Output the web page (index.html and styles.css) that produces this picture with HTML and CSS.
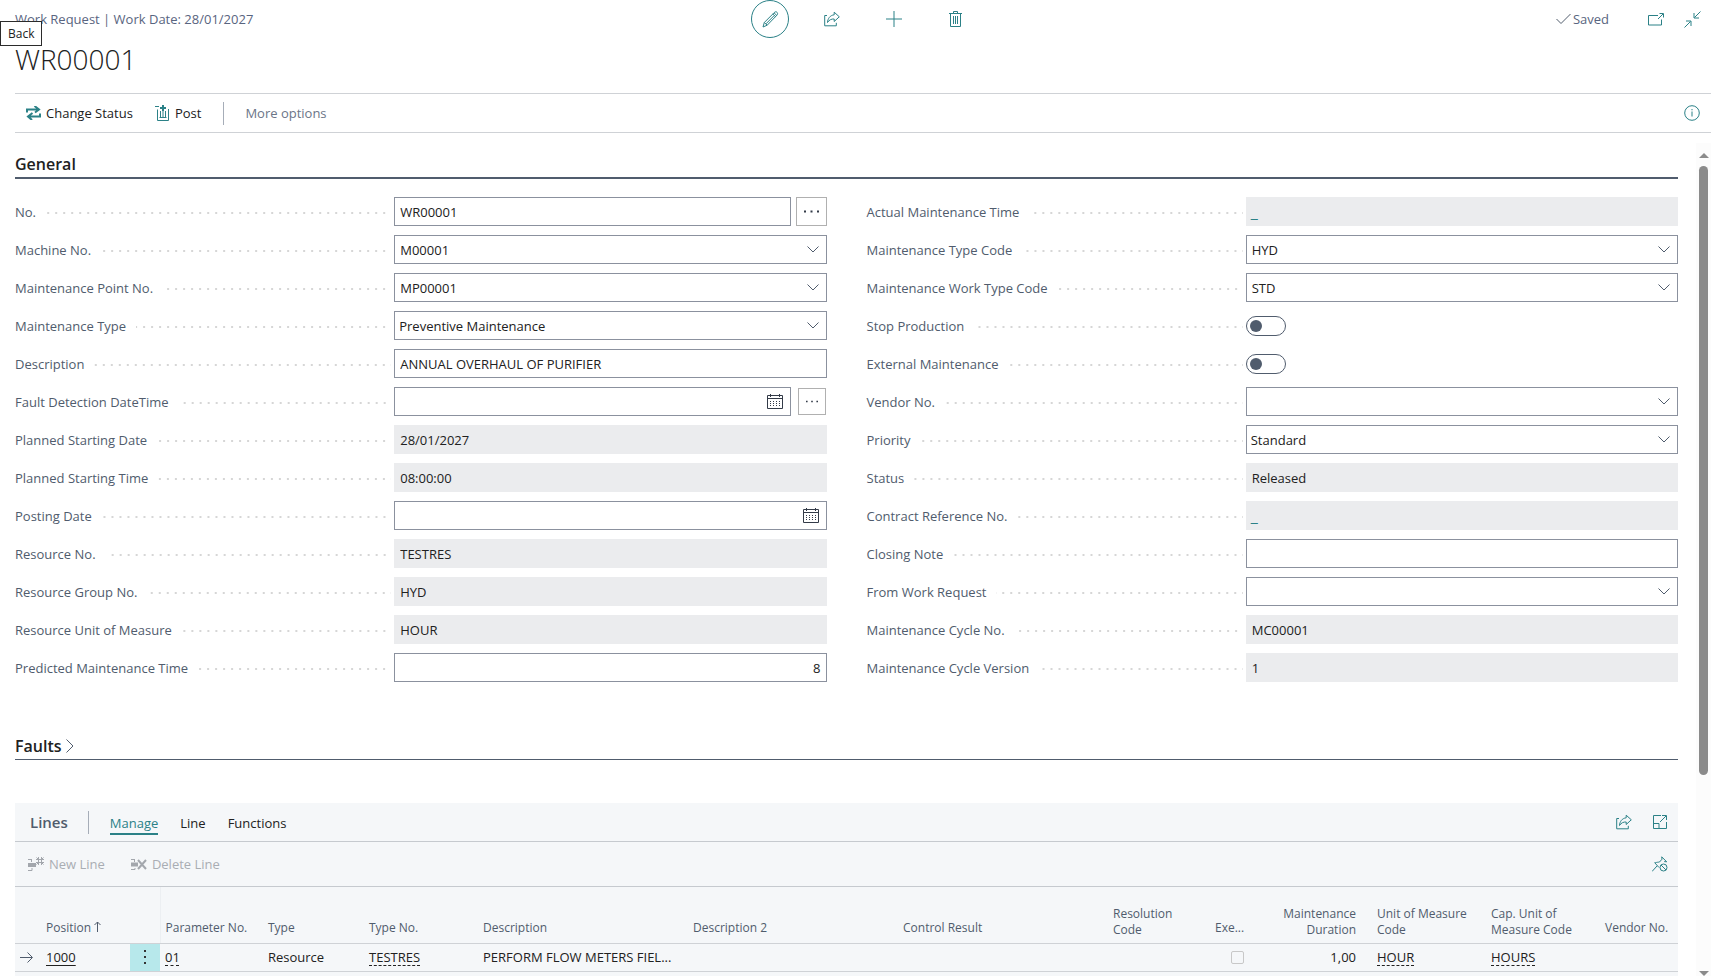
FILE: index.html
```html
<!DOCTYPE html>
<html lang="en">
<head>
    <meta charset="UTF-8">
    <meta name="viewport" content="width=device-width, initial-scale=1.0">
    <title>WR00001 - Work Request</title>
    <link rel="stylesheet" href="styles.css">
</head>
<body>
    <!-- shared icons -->
    <svg class="sprite" aria-hidden="true">
        <symbol id="chevron" viewBox="0 0 12 7"><path d="M.5.5 6 6 11.5.5"/></symbol>
        <symbol id="share" viewBox="0 0 16 16"><path d="M3 4.500H.7v10.300h11.600v-3"/><path d="M10.200 1.200 15.300 5.800l-5.100 4.700V8C7.500 7.800 5.200 8.800 3.500 11.500 3.800 7.500 6 4.300 10.200 3.800z"/></symbol>
        <symbol id="calendar" viewBox="0 0 16 15"><path d="M.5 1.500h15v13H.5zM.5 4.500h15M3.500 0v3M12.500 0v3"/><path d="M3 7.500h10M3 9.500h10M3 11.500h10" stroke-dasharray="1 2" stroke-width="1"/></symbol>
        <symbol id="dots" viewBox="0 0 15 3"><path d="M0 .5h2v2H0zM6.500 .5h2v2h-2zM13 .5h2v2h-2z"/></symbol>
    </svg>

    <div class="tooltip" role="tooltip">Back</div>

    <header class="page-header">
        <div class="caption">Work Request | Work Date: 28/01/2027</div>
        <div class="header-tools">
            <button class="icon-btn round" type="button" aria-label="Edit">
                <svg class="icon" width="17" height="17" viewBox="0 0 17 17"><path d="M1 16l1.300-4.500L12.300 1.500c1-1 2-.9 2.700-.2s.9 1.900 0 2.800L5.200 14.200zM2.300 11.500l2.900 2.700M10.800 3l2.900 2.800M12 1.800l2.900 2.800M4 12.800l8.200-8.300"/></svg>
            </button>
            <button class="icon-btn" type="button" aria-label="Share"><svg class="icon" width="16" height="16"><use href="#share"/></svg></button>
            <button class="icon-btn" type="button" aria-label="New">
                <svg class="icon" width="16" height="16" viewBox="0 0 16 16"><path d="M8 0v16M0 8h16"/></svg>
            </button>
            <button class="icon-btn" type="button" aria-label="Delete">
                <svg class="icon" width="14" height="16" viewBox="0 0 14 16"><path d="M0 2.500h13M4.500 2.500v-2h4v2M1.500 2.500v13h10v-13M4.500 5v8M6.500 5v8M8.500 5v8"/></svg>
            </button>
        </div>
        <div class="header-right">
            <span class="saved">
                <svg class="icon" width="15" height="12" viewBox="0 0 15 12"><path d="M.5 6l4.500 4.500L14.500 1"/></svg>
                Saved
            </span>
            <button class="icon-btn small" type="button" aria-label="Open in new window">
                <svg class="icon" width="16" height="13" viewBox="0 0 16 13"><path d="M10 2.500H.5v9.500h13V6.500M10 6l5-5M11.500.5h4v4"/></svg>
            </button>
            <button class="icon-btn small" type="button" aria-label="Collapse page">
                <svg class="icon" width="17" height="17" viewBox="0 0 17 17"><path d="M16.500.5l-6 6M10 2v5h5M.5 16.500l6-6M2 10h5v5"/></svg>
            </button>
        </div>
    </header>

    <h1 class="title">WR00001</h1>

    <nav class="action-bar">
        <button class="action" type="button">
            <svg class="change-icon" width="15" height="14" viewBox="0 0 15 14"><path d="M1 6.500V3.500h12M8.500 0 13 3.500 9 6.500M14 7.500v3H2M6.500 7 2 10.500l4 3.500"/></svg>
            Change Status
        </button>
        <button class="action" type="button">
            <svg class="icon" width="15" height="16" viewBox="0 0 15 16"><path d="M0 1.500h4M2.500 4.500v11h11V4M5.500 6v6.500M8 6v6.500M10.500 6v6.500M4.500 12.500h7"/><path d="M8 0v6M5 3h6" stroke-width="2"/></svg>
            Post
        </button>
        <span class="divider"></span>
        <button class="action more" type="button">More options</button>
        <button class="info" type="button" aria-label="Show information">
            <svg class="icon" width="16" height="16" viewBox="0 0 16 16"><circle cx="8" cy="8" r="7.300"/><path d="M8 6.500v5M8 4v1.300"/></svg>
        </button>
    </nav>

    <div class="scroll-area">
        <main class="content">
            <h2 class="section-title">General</h2>
            <form class="fields">
                <div class="column">
                    <div class="field">
                        <label for="no">No.</label>
                        <div class="control-row">
                            <div class="control"><input id="no" type="text" value="WR00001"></div>
                            <button class="assist" type="button" aria-label="Choose number series"><svg width="15" height="3"><use href="#dots"/></svg></button>
                        </div>
                    </div>
                    <div class="field">
                        <label for="machine">Machine No.</label>
                        <div class="control"><input id="machine" type="text" value="M00001"><button type="button" aria-label="Look up machine"><svg class="chevron"><use href="#chevron"/></svg></button></div>
                    </div>
                    <div class="field">
                        <label for="point">Maintenance Point No.</label>
                        <div class="control"><input id="point" type="text" value="MP00001"><button type="button" aria-label="Look up maintenance point"><svg class="chevron"><use href="#chevron"/></svg></button></div>
                    </div>
                    <div class="field">
                        <label for="mtype">Maintenance Type</label>
                        <div class="control select"><select id="mtype"><option>Preventive Maintenance</option></select><svg class="chevron"><use href="#chevron"/></svg></div>
                    </div>
                    <div class="field">
                        <label for="description">Description</label>
                        <div class="control"><input id="description" type="text" value="ANNUAL OVERHAUL OF PURIFIER"></div>
                    </div>
                    <div class="field">
                        <label for="fault">Fault Detection DateTime</label>
                        <div class="control-row">
                            <div class="control"><input id="fault" type="text"><button type="button" aria-label="Pick date"><svg class="calendar"><use href="#calendar"/></svg></button></div>
                            <button class="assist compact" type="button" aria-label="Edit date and time"><svg width="12" height="3"><use href="#dots"/></svg></button>
                        </div>
                    </div>
                    <div class="field">
                        <label for="startdate">Planned Starting Date</label>
                        <div class="control readonly"><input id="startdate" type="text" value="28/01/2027" readonly></div>
                    </div>
                    <div class="field">
                        <label for="starttime">Planned Starting Time</label>
                        <div class="control readonly"><input id="starttime" type="text" value="08:00:00" readonly></div>
                    </div>
                    <div class="field">
                        <label for="posting">Posting Date</label>
                        <div class="control"><input id="posting" type="text"><button type="button" aria-label="Pick date"><svg class="calendar"><use href="#calendar"/></svg></button></div>
                    </div>
                    <div class="field">
                        <label for="resource">Resource No.</label>
                        <div class="control readonly"><input id="resource" type="text" value="TESTRES" readonly></div>
                    </div>
                    <div class="field">
                        <label for="group">Resource Group No.</label>
                        <div class="control readonly"><input id="group" type="text" value="HYD" readonly></div>
                    </div>
                    <div class="field">
                        <label for="uom">Resource Unit of Measure</label>
                        <div class="control readonly"><input id="uom" type="text" value="HOUR" readonly></div>
                    </div>
                    <div class="field">
                        <label for="predicted">Predicted Maintenance Time</label>
                        <div class="control"><input id="predicted" class="number" type="text" value="8"></div>
                    </div>
                </div>

                <div class="column">
                    <div class="field">
                        <span class="label">Actual Maintenance Time</span>
                        <div class="control readonly"><a href="#">_</a></div>
                    </div>
                    <div class="field">
                        <label for="typecode">Maintenance Type Code</label>
                        <div class="control"><input id="typecode" type="text" value="HYD"><button type="button" aria-label="Look up type code"><svg class="chevron"><use href="#chevron"/></svg></button></div>
                    </div>
                    <div class="field">
                        <label for="worktype">Maintenance Work Type Code</label>
                        <div class="control"><input id="worktype" type="text" value="STD"><button type="button" aria-label="Look up work type code"><svg class="chevron"><use href="#chevron"/></svg></button></div>
                    </div>
                    <div class="field">
                        <label for="stop">Stop Production</label>
                        <input id="stop" class="toggle" type="checkbox" role="switch">
                    </div>
                    <div class="field">
                        <label for="external">External Maintenance</label>
                        <input id="external" class="toggle" type="checkbox" role="switch">
                    </div>
                    <div class="field">
                        <label for="vendor">Vendor No.</label>
                        <div class="control"><input id="vendor" type="text"><button type="button" aria-label="Look up vendor"><svg class="chevron"><use href="#chevron"/></svg></button></div>
                    </div>
                    <div class="field">
                        <label for="priority">Priority</label>
                        <div class="control select"><select id="priority"><option>Standard</option></select><svg class="chevron"><use href="#chevron"/></svg></div>
                    </div>
                    <div class="field">
                        <label for="status">Status</label>
                        <div class="control readonly"><input id="status" type="text" value="Released" readonly></div>
                    </div>
                    <div class="field">
                        <span class="label">Contract Reference No.</span>
                        <div class="control readonly"><a href="#">_</a></div>
                    </div>
                    <div class="field">
                        <label for="note">Closing Note</label>
                        <div class="control"><input id="note" type="text"></div>
                    </div>
                    <div class="field">
                        <label for="from">From Work Request</label>
                        <div class="control"><input id="from" type="text"><button type="button" aria-label="Look up work request"><svg class="chevron"><use href="#chevron"/></svg></button></div>
                    </div>
                    <div class="field">
                        <label for="cycle">Maintenance Cycle No.</label>
                        <div class="control readonly"><input id="cycle" type="text" value="MC00001" readonly></div>
                    </div>
                    <div class="field">
                        <label for="version">Maintenance Cycle Version</label>
                        <div class="control readonly"><input id="version" type="text" value="1" readonly></div>
                    </div>
                </div>
            </form>

            <h2 class="section-title collapsed">Faults
                <svg width="8" height="14" viewBox="0 0 8 14"><path d="M.5.5 7 7 .5 13.500"/></svg>
            </h2>

            <section class="lines">
                <div class="lines-header">
                    <h3>Lines</h3>
                    <span class="divider"></span>
                    <button class="tab active" type="button">Manage</button>
                    <button class="tab" type="button">Line</button>
                    <button class="tab" type="button">Functions</button>
                    <div class="lines-tools">
                        <button class="tool" type="button" aria-label="Share"><svg class="icon" width="16" height="16"><use href="#share"/></svg></button>
                        <button class="tool" type="button" aria-label="Expand">
                            <svg class="icon" width="15" height="14" viewBox="0 0 15 14"><path d="M7 .5H.5v13h13V7M.5 8.500h5.500v5M7 .5h1M7 7l6-6M9 .5h4.500V5"/></svg>
                        </button>
                    </div>
                </div>
                <div class="lines-actions">
                    <button type="button" disabled>
                        <svg width="16" height="15" viewBox="0 0 16 15"><path d="M0 2.500h4M0 13.500h4V11M3.500 2.500V5"/><path d="M0 8h8" stroke-width="4"/><path d="M10.500 0v8M13.500 0v8M8 2.500h8M8 5.500h8M8.500.5l2 2M15.500.5l-2 2M8.500 7.500l2-2M15.500 7.500l-2-2"/></svg>
                        New Line
                    </button>
                    <button type="button" disabled>
                        <svg width="16" height="13" viewBox="0 0 16 13"><path d="M0 1.500h4M0 11.500h4V10M3.500 1.500V4"/><path d="M0 6.500h7" stroke-width="4"/><path d="M7 2l8 9M15 2l-8 9" stroke-width="2"/></svg>
                        Delete Line
                    </button>
                    <div class="lines-tools">
                        <button class="tool" type="button" aria-label="Unpin">
                            <svg class="icon" width="16" height="16" viewBox="0 0 16 16"><path d="M0 15.500l5-5.500M2.500 6.500l4.500 5M3 7c2-1 3.500-.7 4.500-1L10 3.200 9.700.8l5 5-2.500-.2"/><circle cx="11.500" cy="11.500" r="3.500"/><path d="M9 9l5 5"/></svg>
                        </button>
                    </div>
                </div>
                <table>
                    <colgroup>
                        <col class="c-mark"><col class="c-pos"><col class="c-menu"><col class="c-param"><col class="c-type"><col class="c-typeno">
                        <col class="c-text"><col class="c-text"><col class="c-text"><col class="c-res"><col class="c-exe"><col class="c-dur">
                        <col class="c-uom"><col class="c-uom"><col>
                    </colgroup>
                    <thead>
                        <tr>
                            <th></th>
                            <th>Position <svg width="7" height="11" viewBox="0 0 7 11"><path d="M3.500 11V1M.5 4l3-3 3 3"/></svg></th>
                            <th class="edge"></th>
                            <th>Parameter No.</th>
                            <th>Type</th>
                            <th>Type No.</th>
                            <th>Description</th>
                            <th>Description 2</th>
                            <th>Control Result</th>
                            <th class="two-line">Resolution<br>Code</th>
                            <th>Exe...</th>
                            <th class="two-line right">Maintenance<br>Duration</th>
                            <th class="two-line">Unit of Measure<br>Code</th>
                            <th class="two-line">Cap. Unit of<br>Measure Code</th>
                            <th>Vendor No.</th>
                        </tr>
                    </thead>
                    <tbody>
                        <tr>
                            <td><svg width="13" height="11" viewBox="0 0 13 11"><path d="M0 5.500h12M7.500.5l5 5-5 5"/></svg></td>
                            <td><a class="solid" href="#">1000</a></td>
                            <td class="menu"><button type="button" aria-label="Show more options"><svg width="3" height="15" viewBox="0 0 3 15"><path d="M0 0h2v2H0zM0 6h2v2H0zM0 12h2v2H0z"/></svg></button></td>
                            <td><a href="#">01</a></td>
                            <td>Resource</td>
                            <td><a href="#">TESTRES</a></td>
                            <td>PERFORM FLOW METERS FIEL...</td>
                            <td></td>
                            <td></td>
                            <td></td>
                            <td class="right check"><input type="checkbox" aria-label="Executed" disabled></td>
                            <td class="right">1,00</td>
                            <td><a href="#">HOUR</a></td>
                            <td><a href="#">HOURS</a></td>
                            <td></td>
                        </tr>
                    </tbody>
                </table>
            </section>
        </main>
        <div class="scrollbar" aria-hidden="true">
            <span class="arrow up"></span>
            <span class="thumb"></span>
            <span class="arrow down"></span>
        </div>
    </div>
</body>
</html>
```
FILE: styles.css
```css
* {
    box-sizing: border-box;
}
body {
    font-family: "Open Sans", "Noto Sans", sans-serif;
    font-size: 13px;
    line-height: 18px;
    color: #212121;
    background-color: #fff;
    margin: 0;
    padding: 0 7px 0 15px;
    height: 100vh;
    display: flex;
    flex-direction: column;
    overflow: hidden;
}
button, input, select {
    font: inherit;
    color: inherit;
    margin: 0;
}
button {
    background: none;
    border: none;
    padding: 0;
}
svg {
    fill: none;
    stroke: #505c6d;
    flex: none;
}
.sprite {
    position: absolute;
    width: 0;
    height: 0;
}
.icon {
    stroke: #2b8187;
}

/* header */
.tooltip {
    position: absolute;
    left: 0;
    top: 21px;
    z-index: 1;
    padding: 3px 7px;
    border: 1px solid #2b2b2b;
    background-color: #fff;
    font-size: 12px;
    line-height: 17px;
}
.page-header {
    display: grid;
    grid-template-columns: 1fr auto 1fr;
    align-items: center;
    height: 38px;
    flex: none;
    color: #596580;
}
.header-tools {
    display: flex;
    gap: 24px;
}
.icon-btn {
    display: flex;
    align-items: center;
    justify-content: center;
    width: 38px;
    height: 38px;
}
.icon-btn.round {
    border: 1px solid #2b8187;
    border-radius: 50%;
}
.icon-btn.small {
    width: 37px;
}
.header-right {
    display: flex;
    justify-content: flex-end;
    align-items: center;
}
.saved {
    display: flex;
    align-items: center;
    gap: 2px;
    margin-right: 28px;
}
.saved .icon {
    stroke: #505c6d;
}
.title {
    margin: 0;
    flex: none;
    height: 55px;
    font-size: 28px;
    font-weight: 300;
    line-height: 43px;
}
.action-bar {
    display: flex;
    align-items: center;
    flex: none;
    height: 40px;
    padding: 0 11px;
    border-top: 1px solid #cfd2d6;
    border-bottom: 1px solid #cfd2d6;
}
.action {
    display: flex;
    align-items: center;
    gap: 5px;
    margin-right: 22px;
}
.action.more {
    color: #6b7587;
}
.change-icon {
    stroke: #2b8187;
    stroke-width: 2;
}
.divider {
    width: 1px;
    height: 23px;
    margin-right: 21px;
    background-color: #a6adb8;
}
.info {
    display: flex;
    margin-left: auto;
}

/* scrolling part of the page */
.scroll-area {
    display: flex;
    flex: 1;
    min-height: 0;
    padding-top: 10px;
}
.content {
    flex: 1;
    min-width: 0;
    margin-right: 18px;
    overflow: hidden;
}
.scrollbar {
    display: flex;
    flex-direction: column;
    align-items: center;
    width: 15px;
    padding: 10px 0 0;
    background-color: #fcfcfc;
}
.arrow {
    border: 5px solid transparent;
}
.arrow.up {
    border-top: none;
    border-bottom-color: #8b8b8b;
}
.arrow.down {
    margin-top: auto;
    border-bottom: none;
    border-top-color: #8b8b8b;
}
.thumb {
    width: 9px;
    height: 74%;
    margin-top: 8px;
    border-radius: 5px;
    background-color: #8b8b8b;
}
.section-title {
    display: flex;
    align-items: center;
    gap: 4px;
    margin: 0;
    height: 36px;
    padding-top: 7px;
    border-bottom: 2px solid #505c6d;
    font-size: 16px;
    font-weight: 600;
    line-height: 26px;
}
.section-title.collapsed {
    margin-top: 44px;
    height: 34px;
    border-bottom-width: 1px;
}

/* fields */
.fields {
    display: grid;
    grid-template-columns: 1fr 1fr;
    gap: 40px;
    padding-top: 18px;
}
.column {
    display: flex;
    flex-direction: column;
    gap: 9px;
    min-width: 0;
}
.field {
    display: grid;
    grid-template-columns: 379fr 432fr;
    align-items: center;
    height: 29px;
}
.field label, .label {
    display: flex;
    align-items: center;
    gap: 10px;
    white-space: nowrap;
    color: #505c6d;
}
.field label::after, .label::after {
    content: "";
    flex: 1;
    height: 2px;
    margin: 2px 3px 0 0;
    background: linear-gradient(to right, #d6d6d6 2px, transparent 2px) right top / 8px 2px repeat-x;
}
.control-row {
    display: flex;
    justify-content: space-between;
    align-items: center;
    gap: 5px;
}
.control {
    display: flex;
    align-items: center;
    flex: 1;
    min-width: 0;
    height: 29px;
    border: 1px solid #8b919e;
    background-color: #fff;
}
.control input {
    flex: 1;
    min-width: 0;
    height: 27px;
    padding: 0 5px;
    border: none;
    background: none;
}
.control .number {
    text-align: right;
}
.control button {
    display: flex;
    padding: 0 7px;
}
.control.readonly {
    background-color: #ebecee;
    border-color: #ebecee;
}
.control a {
    padding-left: 4px;
    color: #2b8187;
    font-size: 16px;
    text-decoration: none;
}
.chevron {
    width: 12px;
    height: 7px;
}
.calendar {
    width: 16px;
    height: 15px;
    stroke: #333b48;
}
.control.select {
    display: grid;
}
.control.select select {
    grid-area: 1 / 1;
    height: 27px;
    padding: 0 4px;
    border: none;
    background: none;
    appearance: none;
}
.control.select .chevron {
    grid-area: 1 / 1;
    justify-self: end;
    margin-right: 7px;
    pointer-events: none;
}
.assist {
    display: flex;
    align-items: center;
    justify-content: center;
    width: 31px;
    height: 29px;
    border: 1px solid #b0b0b0;
}
.assist.compact {
    width: 28px;
    height: 27px;
    margin: 0 1px 0 2px;
}
.assist svg {
    fill: #333b48;
    stroke: none;
}
.toggle {
    appearance: none;
    display: flex;
    align-items: center;
    width: 40px;
    height: 20px;
    padding-left: 3px;
    border: 1px solid #505c6d;
    border-radius: 10px;
}
.toggle::before {
    content: "";
    width: 12px;
    height: 12px;
    border-radius: 50%;
    background-color: #505c6d;
}
.toggle:checked {
    justify-content: flex-end;
    padding: 0 3px 0 0;
}

/* lines */
.lines {
    margin-top: 43px;
    height: 200px;
    background-color: #f5f7f9;
}
.lines-header, .lines-actions {
    display: flex;
    align-items: center;
    border-bottom: 1px solid #c6cacf;
}
.lines-header {
    height: 39px;
    padding: 0 10px 0 15px;
}
.lines-header h3 {
    margin: 0 20px 0 0;
    font-size: 15px;
    font-weight: 600;
    color: #505c6d;
}
.tab {
    margin-right: 22px;
    padding: 4px 0 1px;
    border-bottom: 2px solid transparent;
}
.tab.active {
    color: #2b8187;
    border-color: #2b8187;
}
.lines-tools {
    display: flex;
    gap: 21px;
    margin-left: auto;
}
.tool {
    display: flex;
    align-items: center;
}
.lines-actions {
    height: 45px;
    padding: 0 10px 0 13px;
}
.lines-actions > button {
    display: flex;
    align-items: center;
    gap: 5px;
    margin-right: 26px;
    color: #a9adb3;
}
.lines-actions > button svg {
    stroke: #a3a7ad;
}
table {
    width: 100%;
    table-layout: fixed;
    border-collapse: collapse;
}
th, td {
    padding: 0 5px;
    text-align: left;
    white-space: nowrap;
}
th {
    height: 56px;
    padding-bottom: 7px;
    border-bottom: 1px solid #cfd2d6;
    font-size: 12px;
    font-weight: 400;
    line-height: 16px;
    vertical-align: bottom;
    color: #505c6d;
}
.two-line {
    padding-bottom: 5px;
}
td {
    height: 28px;
    border-bottom: 1px solid #cfd2d6;
    line-height: 17px;
}
td svg {
    display: block;
}
td a {
    color: inherit;
    text-decoration: underline dashed 1px;
    text-underline-offset: 3px;
}
td a.solid {
    text-decoration-style: solid;
}
.edge {
    border-right: 1px solid #eceff2;
}
.right {
    text-align: right;
    padding-right: 16px;
}
.check {
    padding-right: 5px;
}
.check input {
    appearance: none;
    display: block;
    width: 13px;
    height: 13px;
    margin-left: auto;
    border: 1px solid #c8c8c8;
    border-radius: 2px;
}
.menu {
    background-color: #b7e8eb;
}
.menu button {
    display: flex;
    margin: 0 auto;
}
.menu svg {
    fill: #333;
    stroke: none;
}
.c-mark { width: 26px; }
.c-pos { width: 89px; }
.c-menu { width: 30px; }
.c-param { width: 103px; }
.c-type { width: 101px; }
.c-typeno { width: 114px; }
.c-text { width: 210px; }
.c-res { width: 102px; }
.c-exe { width: 39px; }
.c-dur { width: 123px; }
.c-uom { width: 114px; }
```
